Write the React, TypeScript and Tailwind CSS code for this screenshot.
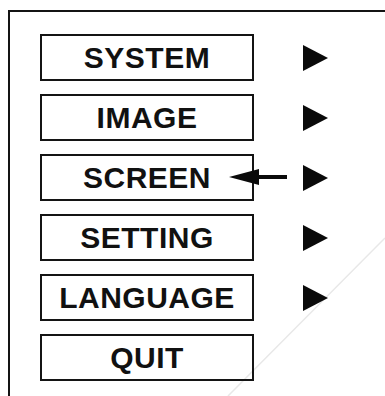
import { memo } from "react";

interface MenuItem {
  label: string;
  sub: boolean;
  pointed?: boolean;
}

const items: MenuItem[] = [
  { label: "SYSTEM", sub: true },
  { label: "IMAGE", sub: true },
  { label: "SCREEN", sub: true, pointed: true },
  { label: "SETTING", sub: true },
  { label: "LANGUAGE", sub: true },
  { label: "QUIT", sub: false },
];

const Triangle = () => (
  <svg width="26" height="26" viewBox="0 0 26 26" className="block">
    <path d="M1 0 L26 13 L1 26 Z" fill="#0a0a0a" />
  </svg>
);

const PointerArrow = () => (
  <svg width="58" height="16" viewBox="0 0 58 16" className="block">
    <path d="M0 8 L30 0 L30 16 Z" fill="#0a0a0a" />
    <rect x="28" y="6" width="30" height="4" fill="#0a0a0a" />
  </svg>
);

const ProjectorMenu = () => {
  return (
    <div className="relative w-[385px] h-[396px] overflow-hidden bg-white font-['Liberation_Sans',Arial,sans-serif]">
      {/* Faint watermark stroke */}
      <svg className="absolute inset-0 pointer-events-none" width="385" height="396">
        <line x1="228" y1="396" x2="385" y2="238" stroke="#e8e8e8" strokeWidth="1.5" />
      </svg>

      {/* Menu frame */}
      <div className="absolute left-[8px] top-[10px] right-0 bottom-0 border-t-2 border-l-2 border-[#141414]">
        <div className="flex flex-col gap-[13px] pl-[30px] pt-[22px]">
          {items.map((item) => (
            <div key={item.label} className="relative flex items-center">
              <div className="flex h-[47px] w-[214px] items-center justify-center border-2 border-[#141414]">
                <span className="text-[30px] font-bold leading-none tracking-[0.5px] text-[#111]">
                  {item.label}
                </span>
              </div>
              {item.sub && (
                <div className="ml-[48px]">
                  <Triangle />
                </div>
              )}
              {item.pointed && (
                <div className="absolute left-[189px] top-[15px]">
                  <PointerArrow />
                </div>
              )}
            </div>
          ))}
        </div>
      </div>
    </div>
  );
};

export default memo(ProjectorMenu);
